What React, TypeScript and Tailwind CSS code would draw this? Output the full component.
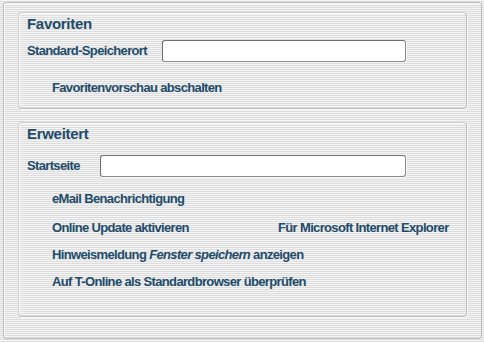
import React from 'react';

const stripes =
  'bg-[repeating-linear-gradient(to_bottom,#f4f4f4_0px,#f4f4f4_1px,#dddddd_1px,#dddddd_2px)]';

const Label: React.FC<{ children: React.ReactNode; className?: string }> = ({ children, className = '' }) => (
  <div className={`h-4 leading-4 text-[13px] font-bold tracking-[-0.65px] text-[#1e4b6b] whitespace-nowrap ${className}`}>
    {children}
  </div>
);

const Field: React.FC<{ width: string }> = ({ width }) => (
  <div className={`${width} h-[22px] bg-white border border-[#8a8a8a] border-t-[#6f6f6f] border-l-[#6f6f6f] rounded-[3px] shadow-[1px_1px_0_#f8f8f8]`} />
);

const Panel: React.FC<{ title: string; className?: string; children: React.ReactNode }> = ({ title, className = '', children }) => (
  <div
    className={`w-[449px] border border-[#cfcfcf] border-r-[#bdbdbd] border-b-[#bdbdbd] rounded-[4px] shadow-[inset_1px_1px_0_#fafafa,1px_1px_0_#fafafa] pl-2 pt-[1px] ${className}`}
  >
    <div className="h-[18px] leading-[18px] mt-[1px] text-[15px] font-bold tracking-[-0.3px] text-[#1e4b6b]">{title}</div>
    {children}
  </div>
);

export default function App() {
  return (
    <div
      className={`w-[484px] h-[342px] ${stripes} pt-[2px] pl-[3px]`}
      style={{ fontFamily: '"Liberation Sans", Arial, sans-serif' }}
    >
      <div className="w-[479px] h-[337px] border border-[#bcbcbc] rounded-[3px] pl-[14px] pt-[9px] flex flex-col shadow-[inset_1px_1px_0_#fafafa]">
        {/* Favoriten */}
        <Panel title="Favoriten" className="h-[97px]">
          <div className="flex items-center mt-[7px]">
            <Label className="w-[135px]">Standard-Speicherort</Label>
            <Field width="w-[244px]" />
          </div>
          <Label className="ml-[25px] mt-[18px]">Favoritenvorschau abschalten</Label>
        </Panel>

        {/* Erweitert */}
        <Panel title="Erweitert" className="h-[195px] mt-[13px]">
          <div className="flex items-center mt-[12px]">
            <Label className="w-[73px]">Startseite</Label>
            <Field width="w-[306px]" />
          </div>
          <Label className="ml-[25px] mt-[14px]">eMail Benachrichtigung</Label>
          <div className="flex mt-[13px]">
            <Label className="ml-[25px] w-[226px]">Online Update aktivieren</Label>
            <Label className="tracking-[-0.55px]">Für Microsoft Internet Explorer</Label>
          </div>
          <Label className="ml-[25px] mt-[11px]">
            Hinweismeldung <span className="italic">Fenster speichern</span> anzeigen
          </Label>
          <Label className="ml-[25px] mt-[11px]">Auf T-Online als Standardbrowser überprüfen</Label>
        </Panel>
      </div>
    </div>
  );
}
